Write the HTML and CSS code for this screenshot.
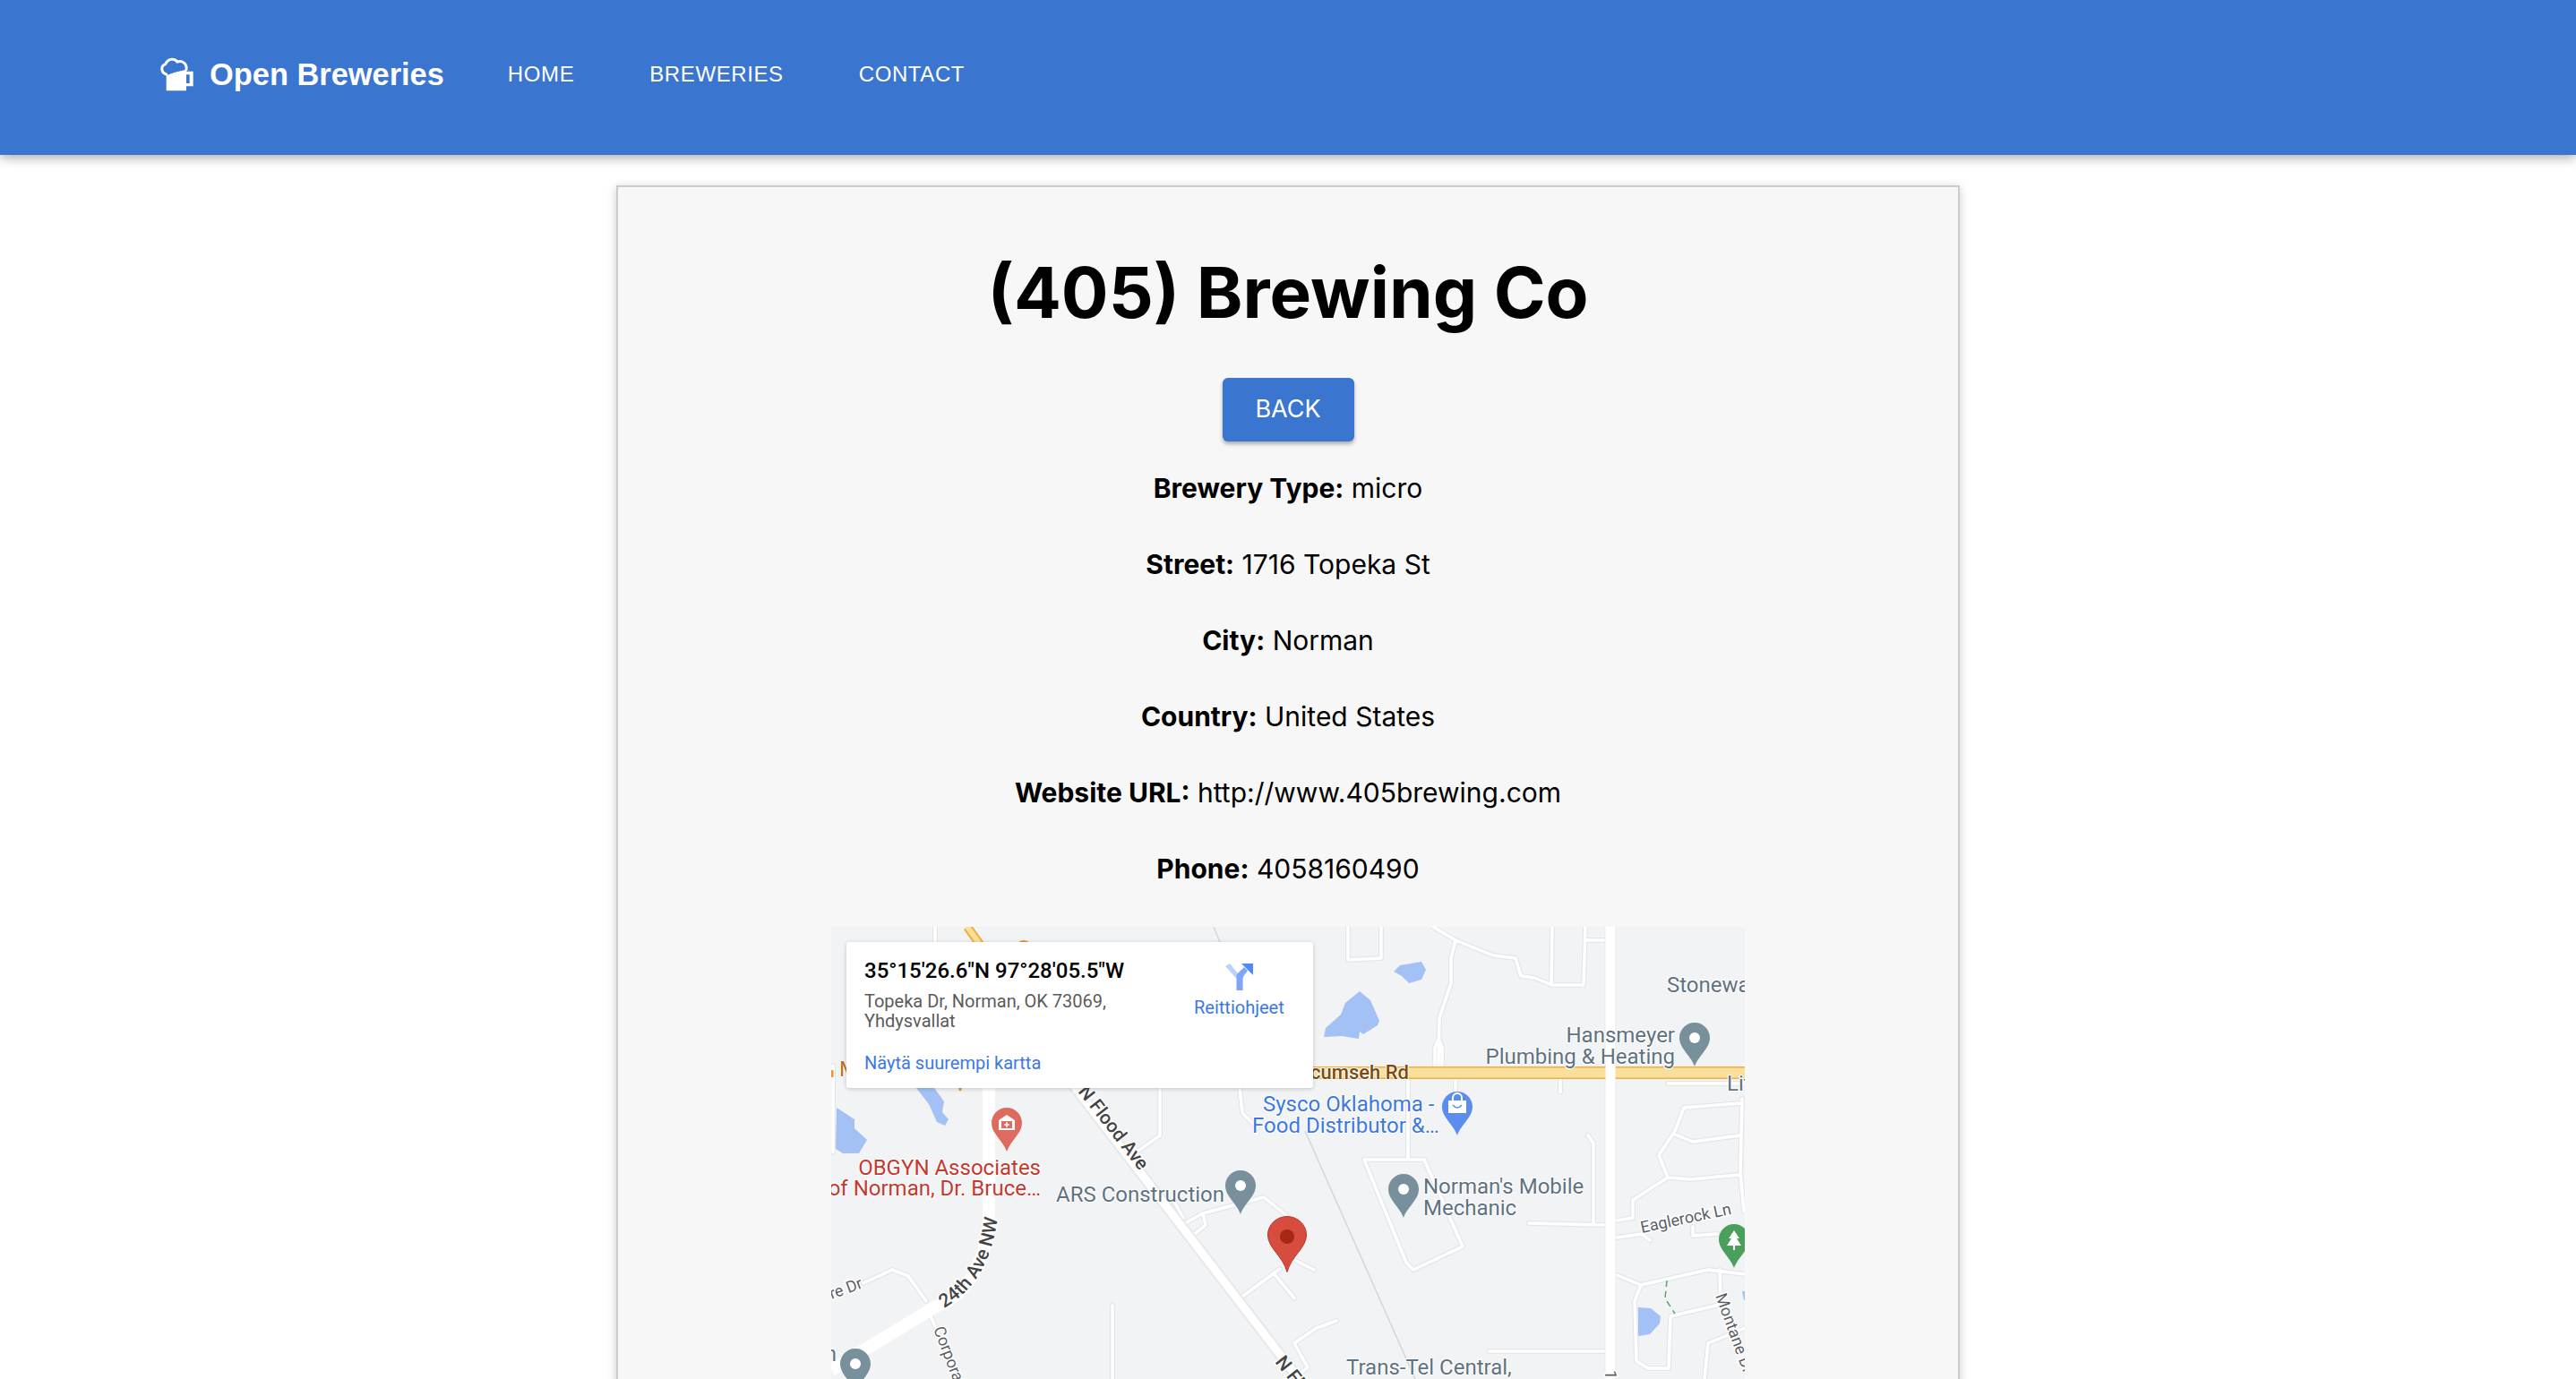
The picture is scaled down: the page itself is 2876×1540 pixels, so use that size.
FILE: index.html
```html
<!DOCTYPE html>
<html lang="en">
<head>
  <meta charset="UTF-8">
  <meta name="viewport" content="width=device-width, initial-scale=1.0">
  <title>Open Breweries</title>
  <link rel="stylesheet" href="styles.css">
</head>
<body>
  <header class="navbar">
    <a class="brand" href="#">
      <svg class="brand-icon" viewBox="55 40 120 120" aria-hidden="true">
        <path d="M78 104 L145 78 V90 H168 V140 H145 V155 H78z M145 101 V130 H156 V101z" fill="#fff" fill-rule="evenodd"/>
        <path d="M78 100C60 95 58 72 75 66 84 46 105 46 115 58 131 52 148 64 145 84" fill="#3a75cf" stroke="#fff" stroke-width="9" stroke-linecap="round"/>
      </svg>
      <span>Open Breweries</span>
    </a>
    <nav class="nav-links">
      <a href="#">Home</a>
      <a href="#">Breweries</a>
      <a href="#">Contact</a>
    </nav>
  </header>

  <main class="card">
    <h1>(405) Brewing Co</h1>
    <button class="back-btn">Back</button>
    <p><strong>Brewery Type:</strong> micro</p>
    <p><strong>Street:</strong> 1716 Topeka St</p>
    <p><strong>City:</strong> Norman</p>
    <p><strong>Country:</strong> United States</p>
    <p><strong>Website URL:</strong> http://www.405brewing.com</p>
    <p><strong>Phone:</strong> 4058160490</p>

    <div class="map">
      <svg class="map-canvas" viewBox="928 1035 1020 505" aria-hidden="true">
        <defs>
          <path id="pin" d="M17 0C7.6 0 0 7.6 0 17c0 12 13 20 17 32 4-12 17-20 17-32C34 7.6 26.4 0 17 0z"/>
          <path id="curve24" d="M1054 1461Q1110 1428 1115 1346"/>
          <path id="minor" d="M1505 1035V1072L1542 1070V1035M1600 1035L1625 1050 1667 1067 1692 1070 1698 1090 1713 1092 1733 1100H1768L1770 1035M1733 1035L1732 1100M1770 1050H1792M1625 1050L1620 1070V1098L1607 1137 1606 1193M1602 1193V1170L1606 1160 1610 1170V1193M1572 1207V1293M1625 1202V1220M1742 1205V1220M1523 1295H1590L1633 1392 1578 1418 1570 1410z M1773 1268L1779 1277V1367M1707 1366L1793 1368M1663 1509H1793M1805 1363L1823 1360V1340L1862 1315 1852 1290 1870 1263 1880 1237 1943 1232M1870 1267L1890 1275 1943 1268M1862 1315L1887 1317 1942 1312M1945 1227L1943 1310 1947 1353M1862 1210H1948M1805 1382L1833 1378 1842 1385M1803 1423L1832 1435 1907 1418 1948 1423M1832 1435L1825 1453 1827 1520 1840 1528H1863L1865 1470 1920 1457M1920 1418L1921 1457M1903 1540L1907 1500 1948 1483M1890 1370V1380L1917 1378M1492 1475L1470 1483 1445 1500 1460 1527 1443 1540M1447 1408L1467 1418M1440 1443L1445 1450M1295 1215V1268L1268 1287M1384 1215L1387 1243 1404 1260M1325 1365L1343 1355 1411 1337 1436 1357M1334 1378L1346 1368 1343 1355M1311 1342L1321 1360M1384 1450L1429 1417M1423 1423L1445 1450M964 1433L996 1418 1014 1425 1034 1453M1039 1470L1057 1510 1068 1540M930 1190V1287M1044 1035V1052M1242 1458V1540"/>
        </defs>

        <!-- water -->
        <g fill="#a3c1f5">
          <path d="M1023 1215H1043L1054 1230 1052 1242 1059 1250 1055 1257 1046 1253 1037 1233z"/>
          <path d="M934 1237L954 1250V1260L968 1273 959 1288H941L933 1283z"/>
          <path d="M1478 1158L1480 1148 1497 1133 1502 1120 1518 1107 1530 1117 1540 1140 1538 1145 1522 1155 1518 1152 1517 1160 1498 1157z"/>
          <path d="M1556 1085L1563 1078 1587 1074 1592 1083 1587 1094 1573 1098 1565 1090z"/>
          <path d="M1829 1460L1843 1461 1854 1470 1853 1478 1842 1490 1829 1492z"/>
          <path d="M1945 1442H1948V1452H1947z"/>
        </g>

        <!-- thin rail line -->
        <path class="rail" d="M1457 1263L1580 1540M1355 1035L1362 1052"/>

        <!-- minor roads -->
        <use href="#minor" class="road-case"/>
        <use href="#minor" class="road-fill"/>
        <path class="trail" d="M1861 1430L1859 1450 1870 1467"/>

        <!-- main roads -->
        <path class="main-case" d="M1170 1175L1450 1540M1104 1215V1353C1104 1400 1085 1445 1043 1460L928 1530M1798 1035V1540"/>
        <path class="main-fill narrow" d="M1170 1175L1450 1540"/>
        <path class="main-fill wide" d="M1104 1215V1353C1104 1400 1085 1445 1043 1460L928 1530"/>
        <path class="main-fill" d="M1798 1035V1540"/>

        <!-- highways -->
        <path class="hwy-case" d="M1440 1198H1948"/>
        <path class="hwy-fill" d="M1440 1198H1948"/>
        <path class="hwy-case thin" d="M1080 1035L1095 1056"/>
        <path class="hwy-fill thin" d="M1080 1035L1095 1056"/>
        <path class="main-fill" d="M1798 1191V1205"/>
        <circle cx="1143" cy="1060" r="10" fill="#e8943a"/>
        <path d="M1072 1208V1218" stroke="#e8943a" stroke-width="3"/>
        <path d="M929 1195V1203" stroke="#e8943a" stroke-width="3"/>

        <!-- street names -->
        <g class="street">
          <text class="bold-street" x="1203" y="1219" transform="rotate(52 1203 1219)">N Flood Ave</text>
          <text class="bold-street" x="1423" y="1521" transform="rotate(52 1423 1521)">N Flood Ave</text>
          <text class="bold-street"><textPath href="#curve24">24th Ave NW</textPath></text>
          <text x="964" y="1438" text-anchor="end" transform="rotate(-20 964 1438)">Centre Dr</text>
          <text x="1042" y="1484" transform="rotate(69 1042 1484)">Corporate</text>
          <text x="1833" y="1377" transform="rotate(-12 1833 1377)">Eaglerock Ln</text>
          <text x="1915" y="1447" transform="rotate(70 1915 1447)">Montane Dr</text>
          <text x="1792" y="1530" transform="rotate(90 1792 1530)">1</text>
        </g>

        <!-- place labels -->
        <g class="label red" text-anchor="end">
          <text x="1162" y="1312">OBGYN Associates</text>
          <text x="1162" y="1335">of Norman, Dr. Bruce…</text>
        </g>
        <g class="label grey">
          <text x="1179" y="1342">ARS Construction</text>
          <text x="1589" y="1333">Norman's Mobile</text>
          <text x="1589" y="1357">Mechanic</text>
          <text x="1861" y="1108">Stonewall</text>
          <text x="1928" y="1218">Little</text>
          <text x="1503" y="1535">Trans-Tel Central,</text>
          <text x="934" y="1520" text-anchor="end">n</text>
          <text x="1870" y="1164" text-anchor="end">Hansmeyer</text>
          <text x="1870" y="1188" text-anchor="end">Plumbing &amp; Heating</text>
        </g>
        <g class="label blue">
          <text x="1410" y="1241">Sysco Oklahoma -</text>
          <text x="1398" y="1265">Food Distributor &amp;…</text>
        </g>
        <text class="label brown" x="1573" y="1205" text-anchor="end">Tecumseh Rd</text>
        <text class="label orange" x="937" y="1202">M</text>

        <!-- pins -->
        <use href="#pin" x="1875" y="1142" fill="#78909c"/>
        <circle cx="1892" cy="1159" r="6" fill="#fff"/>
        <use href="#pin" x="1550" y="1311" fill="#78909c"/>
        <circle cx="1567" cy="1328" r="6" fill="#fff"/>
        <use href="#pin" x="1368" y="1307" fill="#78909c"/>
        <circle cx="1385" cy="1324" r="6" fill="#fff"/>
        <use href="#pin" x="938" y="1506" fill="#78909c"/>
        <circle cx="955" cy="1523" r="6" fill="#fff"/>

        <use href="#pin" x="1610" y="1219" fill="#5b8def"/>
        <path d="M1617 1229H1637V1243H1617z" fill="#fff"/>
        <path d="M1622 1229V1226A5 5 0 0 1 1632 1226V1229" fill="none" stroke="#fff" stroke-width="2"/>
        <path d="M1622 1234Q1627 1240 1632 1234" fill="none" stroke="#5b8def" stroke-width="1.6"/>

        <use href="#pin" x="1107" y="1237" fill="#dd6b5f"/>
        <path d="M1124 1245L1133 1251V1262H1115V1251z" fill="#fff"/>
        <rect x="1118" y="1252" width="12" height="8" fill="#dd6b5f"/>
        <path d="M1124 1253V1259M1121 1256H1127" stroke="#fff" stroke-width="1.4"/>

        <use href="#pin" x="1919" y="1367" fill="#4b9f5d"/>
        <path d="M1936 1374L1942 1383H1939L1944 1391H1937V1396H1935V1391H1928L1933 1383H1930z" fill="#fff"/>

        <path d="M1437 1358.500C1425.500 1358.500 1415.500 1367.500 1415.500 1379 1415.500 1394 1432 1402 1437 1420.500 1442 1402 1458.500 1394 1458.500 1379 1458.500 1367.500 1448.500 1358.500 1437 1358.500z" fill="#d64c3d" stroke="#b8382b" stroke-width="1"/>
        <circle cx="1437" cy="1381" r="8" fill="#a52714"/>
      </svg>

      <div class="place-card">
        <div class="place-info">
          <div class="place-title">35°15'26.6"N 97°28'05.5"W</div>
          <div class="place-address">Topeka Dr, Norman, OK 73069, Yhdysvallat</div>
          <a class="map-link larger" href="#">Näytä suurempi kartta</a>
        </div>
        <a class="directions" href="#">
          <svg class="directions-icon" viewBox="0 0 31 30" aria-hidden="true">
            <path d="M0 3L5 0 14 11 12.500 17z" fill="#bdd0fb"/>
            <path d="M12.500 30V15C12.500 10 18 8 21 4L25 8C22 12 19.600 14 19.600 18V30z" fill="#7ea6f8"/>
            <path d="M18 0H31V13z" fill="#4d8af7"/>
          </svg>
          <span class="map-link">Reittiohjeet</span>
        </a>
      </div>
    </div>
  </main>
</body>
</html>
```

FILE: styles.css
```css
html, body {
  height: 100%;
}

body {
  margin: 0;
  overflow: hidden;
  background: #fff;
  color: #000;
  font-family: Inter, "Liberation Sans", sans-serif;
}

a {
  color: inherit;
  text-decoration: none;
}

.navbar {
  display: flex;
  align-items: flex-start;
  height: 173px;
  padding: 62px 0 0 178px;
  box-sizing: border-box;
  background: #3a75cf;
  color: #fff;
  font-family: "Liberation Sans", Arial, sans-serif;
  box-shadow: 0 3px 12px rgba(0, 0, 0, 0.35);
  position: relative;
}

.brand {
  display: flex;
  align-items: center;
  gap: 16px;
  height: 42px;
  font-size: 34.4px;
  font-weight: 700;
}

.brand-icon {
  width: 40px;
  height: 40px;
}

.nav-links {
  display: flex;
  gap: 84px;
  margin-left: 71px;
  height: 42px;
  align-items: center;
  font-size: 24px;
  letter-spacing: 0.6px;
  text-transform: uppercase;
}

.card {
  width: 1500px;
  height: 1400px;
  box-sizing: border-box;
  margin: 34px auto 0;
  padding: 69px 0 0;
  background: #f7f7f7;
  border: 2px solid #ccc;
  box-shadow: 0 2px 10px rgba(0, 0, 0, 0.2);
  text-align: center;
}

h1 {
  margin: 0 0 47px;
  font-size: 78.3px;
  line-height: 97px;
  font-weight: 700;
}

.back-btn {
  display: block;
  width: 147px;
  height: 71px;
  margin: 0 auto 33px;
  padding: 0 0 3px;
  border: 0;
  border-radius: 6px;
  background: #3a75cf;
  color: #fff;
  font-family: Inter, "Liberation Sans", sans-serif;
  font-size: 27px;
  text-transform: uppercase;
  box-shadow: 0 3px 4px rgba(0, 0, 0, 0.3);
}

.card p {
  margin: 0 0 46px;
  font-size: 30px;
  line-height: 39px;
}

.card p:last-of-type {
  margin-bottom: 45px;
}

.map {
  position: relative;
  width: 1020px;
  height: 560px;
  margin: 0 auto;
  overflow: hidden;
  background: #f2f3f5;
  font-family: Roboto, "Liberation Sans", sans-serif;
}

.map-canvas {
  display: block;
  width: 1020px;
  height: 505px;
  font-family: Roboto, "Liberation Sans", sans-serif;
}

.road-case,
.road-fill,
.rail,
.trail,
.main-case,
.main-fill,
.hwy-case,
.hwy-fill {
  fill: none;
  stroke-linejoin: round;
}

.road-case,
.road-fill {
  stroke-linecap: round;
}

.road-case {
  stroke: #e4e7ea;
  stroke-width: 6;
}

.road-fill {
  stroke: #fff;
  stroke-width: 3.5;
}

.rail {
  stroke: #d3d6da;
  stroke-width: 1.5;
}

.trail {
  stroke: #55a868;
  stroke-width: 1.5;
  stroke-dasharray: 7 5;
}

.main-case {
  stroke: #e6e8eb;
  stroke-width: 13;
}

.main-fill {
  stroke: #fff;
  stroke-width: 11;
}

.main-fill.narrow {
  stroke-width: 9;
}

.main-fill.wide {
  stroke-width: 14;
}

.hwy-case {
  stroke: #f2ad3e;
  stroke-width: 14;
}

.hwy-fill {
  stroke: #f9e09a;
  stroke-width: 11;
}

.hwy-case.thin {
  stroke-width: 10;
}

.hwy-fill.thin {
  stroke-width: 6;
}

.street text {
  fill: #5a5f66;
  font-size: 18px;
  stroke: #fff;
  stroke-width: 3px;
  paint-order: stroke;
}

.street .bold-street {
  fill: #444;
  font-size: 21px;
  font-weight: 500;
}

.label text,
text.label {
  font-size: 24px;
  stroke: #fff;
  stroke-width: 2px;
  paint-order: stroke;
}

.label.red text {
  fill: #c5392f;
}

.label.grey text {
  fill: #5f7282;
}

.label.blue text {
  fill: #3d78e0;
}

text.brown {
  fill: #7a4a12;
  font-size: 22px;
  font-weight: 500;
}

text.orange {
  fill: #c5721a;
}

.place-card {
  position: absolute;
  left: 17px;
  top: 17px;
  display: flex;
  box-sizing: border-box;
  width: 521px;
  height: 163px;
  padding: 18px 20px 0;
  background: #fff;
  border-radius: 3px;
  box-shadow: 0 1px 5px rgba(0, 0, 0, 0.2);
  text-align: left;
}

.place-info {
  width: 350px;
}

.place-title {
  font-size: 24px;
  line-height: 29px;
  font-weight: 500;
  white-space: nowrap;
}

.place-address {
  max-width: 300px;
  margin-top: 8px;
  font-size: 20px;
  line-height: 22px;
  color: #5b5b5b;
}

.map-link {
  color: #3b78e7;
  font-size: 20px;
  line-height: 24px;
}

.larger {
  display: block;
  margin-top: 24px;
}

.directions {
  display: flex;
  flex-direction: column;
  align-items: center;
  margin-left: 18px;
  padding-top: 6px;
  gap: 7px;
}

.directions-icon {
  width: 31px;
  height: 30px;
}
```
